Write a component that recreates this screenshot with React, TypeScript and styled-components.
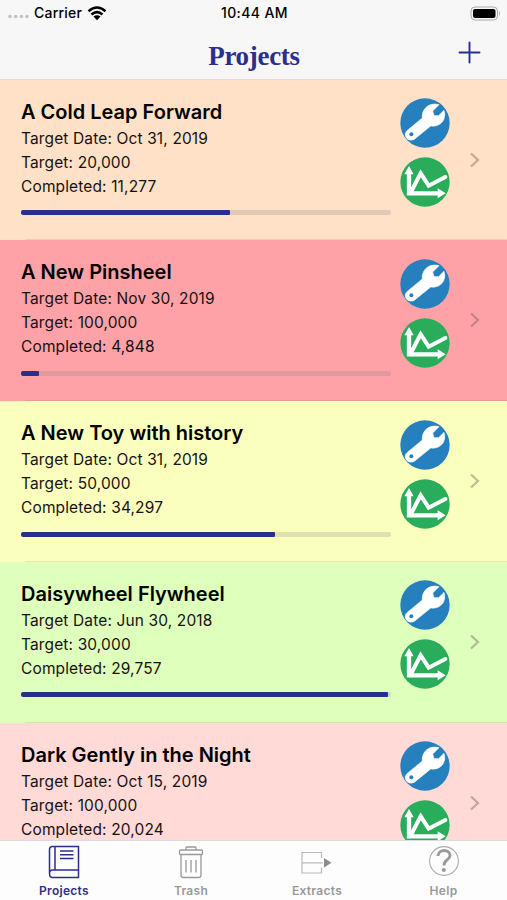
import React from "react";
import styled, { createGlobalStyle } from "styled-components";

const NAVY = "#2b2f8c";

const GlobalStyle = createGlobalStyle`
  * { box-sizing: border-box; }
  body { margin: 0; background: #fff; font-family: Inter, "Liberation Sans", sans-serif; }
`;

const Screen = styled.div`
  width: 507px;
  height: 900px;
  display: flex;
  flex-direction: column;
  overflow: hidden;
  color: #000;
`;

const Header = styled.header`
  flex: none;
  height: 79.5px;
  background: #f7f7f7;
  border-bottom: 1px solid #e3dbd5;
`;

const StatusBar = styled.div`
  height: 26px;
  display: grid;
  grid-template-columns: 1fr auto 1fr;
  align-items: center;
  padding: 0 6px 0 8px;
  font-size: 14px;
  font-weight: 500;
  line-height: 26px;
`;

const Carrier = styled.div`
  display: flex;
  align-items: center;
  gap: 5px;
  letter-spacing: 0.22px;
`;

const Clock = styled.div`
  letter-spacing: 0.4px;
`;

const BatteryIcon = styled.svg`
  justify-self: end;
`;

const NavBar = styled.div`
  height: 52px;
  display: grid;
  grid-template-columns: 1fr auto 1fr;
  align-items: center;
  padding: 0 26px;
`;

const NavTitle = styled.h1`
  grid-column: 2;
  margin: 8px 0 0 1px;
  font: 700 27px/30px "Liberation Serif", serif;
  letter-spacing: -0.3px;
  color: ${NAVY};
`;

const AddButton = styled.button`
  justify-self: end;
  display: flex;
  padding: 0;
  border: 0;
  background: none;
`;

const List = styled.main`
  flex: 1;
  min-height: 0;
  overflow: hidden;
`;

const Row = styled.article<{ $color: string }>`
  height: 160.8px;
  display: flex;
  padding: 0 26px 0 21px;
  background:
    linear-gradient(rgba(120, 110, 100, 0.16), rgba(120, 110, 100, 0.16)) 25px 100% / 100% 1px no-repeat,
    ${(p) => p.$color};
`;

const Details = styled.div`
  width: 370px;
  padding-top: 19px;
`;

const ProjectName = styled.h2`
  margin: 0 0 2px;
  font-size: 20px;
  font-weight: 600;
  line-height: 26px;
  letter-spacing: 0;
  white-space: nowrap;
`;

const Meta = styled.p`
  margin: 0;
  font-size: 15.5px;
  line-height: 24px;
  letter-spacing: 0.13px;
  color: #17110f;
  white-space: nowrap;
`;

const Track = styled.div`
  height: 5px;
  margin-top: 11.5px;
  border-radius: 2px;
  background: rgba(125, 125, 135, 0.23);
  overflow: hidden;
`;

const Fill = styled.div`
  height: 100%;
  border-radius: 1px;
  background: #26308c;
`;

const Actions = styled.div`
  width: 50px;
  margin-left: 9px;
  padding-top: 18.5px;
  display: flex;
  flex-direction: column;
  gap: 9px;
  svg { display: block; }
`;

const Disclosure = styled.svg`
  margin: 71px 0 0 auto;
`;

const TabBar = styled.nav`
  flex: none;
  height: 60px;
  display: grid;
  grid-template-columns: 128px 126px 126px 127px;
  background: #fdfdfd;
  border-top: 1px solid #dedada;
`;

const Tab = styled.div<{ $active?: boolean }>`
  display: flex;
  flex-direction: column;
  align-items: center;
  color: ${(p) => (p.$active ? NAVY : "#999")};
  svg { margin-top: 4px; }
`;

const TabLabel = styled.span`
  margin-top: 4px;
  font-size: 12px;
  font-weight: 600;
  line-height: 16px;
  letter-spacing: 0.3px;
`;

const WrenchIcon = () => (
  <svg width="50" height="50" viewBox="0 0 150 150">
    <circle cx="75" cy="75" r="74" fill="#2680bd" />
    <path
      d="M21 98 L67 60 C64 38 83 11 117 20 L98 39 L102 53 L116 53 L132 37 C141 65 121 88 92 84 L45 122 C36 129 24 127 19 119 C14 112 15 103 21 98 Z"
      fill="#fff"
      stroke="#fff"
      strokeWidth="2"
      strokeLinejoin="round"
    />
    <circle cx="34" cy="109" r="6" fill="#2680bd" />
  </svg>
);

const ChartIcon = () => (
  <svg width="50" height="50" viewBox="0 0 150 150">
    <circle cx="75" cy="75" r="74" fill="#29ad5b" />
    <g fill="none" stroke="#fff">
      <path d="M27 44 V109 H116" strokeWidth="13" />
      <path d="M36 99 L62 49 L86 86 L136 60" strokeWidth="12" strokeLinecap="round" strokeLinejoin="miter" />
    </g>
    <path d="M27 27 L41 52 H13 Z M137 109 L113 94 V124 Z" fill="#fff" />
  </svg>
);

const projects = [
  { name: "A Cold Leap Forward", due: "Oct 31, 2019", target: 20000, done: 11277, color: "#fee1c6" },
  { name: "A New Pinsheel", due: "Nov 30, 2019", target: 100000, done: 4848, color: "#ffa2a8" },
  { name: "A New Toy with history", due: "Oct 31, 2019", target: 50000, done: 34297, color: "#fbffbd" },
  { name: "Daisywheel Flywheel", due: "Jun 30, 2018", target: 30000, done: 29757, color: "#dfffbc" },
  { name: "Dark Gently in the Night", due: "Oct 15, 2019", target: 100000, done: 20024, color: "#ffdad7" },
];

const format = (n: number) => n.toLocaleString("en-US");

export default function App() {
  return (
    <Screen>
      <GlobalStyle />
      <Header>
        <StatusBar>
          <Carrier>
            <svg width="21" height="12" viewBox="0 0 21 12" fill="#c3c3c3">
              <circle cx="2" cy="9.5" r="1.8" />
              <circle cx="7.7" cy="9.5" r="1.8" />
              <circle cx="13.4" cy="9.5" r="1.8" />
              <circle cx="19" cy="9.5" r="1.8" />
            </svg>
            <span>Carrier</span>
            <svg width="20" height="15" viewBox="0 0 20 15" fill="none" stroke="#000" strokeWidth="2.5">
              <path d="M1.5 5.2 Q10 -2.1 18.5 5.2" />
              <path d="M4.5 8.5 Q10 3.8 15.5 8.5" />
              <path d="M6.5 10.6 Q10 7.7 13.5 10.6 L10 14.3 Z" fill="#000" stroke="none" />
            </svg>
          </Carrier>
          <Clock>10:44 AM</Clock>
          <BatteryIcon width="31" height="15" viewBox="0 0 31 15">
            <rect x="1" y="1" width="26.5" height="13" rx="4" fill="none" stroke="#aaa" />
            <rect x="3" y="3" width="22.5" height="9" rx="2" />
            <path d="M29 5 Q31 7.5 29 10 Z" fill="#aaa" />
          </BatteryIcon>
        </StatusBar>
        <NavBar>
          <NavTitle>Projects</NavTitle>
          <AddButton aria-label="Add project">
            <svg width="23" height="23" viewBox="0 0 23 23" stroke={NAVY} strokeWidth="1.9" strokeLinecap="round">
              <path d="M11.5 1.5 V21.5 M1.5 11.5 H21.5" />
            </svg>
          </AddButton>
        </NavBar>
      </Header>
      <List>
        {projects.map((p) => (
          <Row key={p.name} $color={p.color}>
            <Details>
              <ProjectName>{p.name}</ProjectName>
              <Meta>Target Date: {p.due}</Meta>
              <Meta>Target: {format(p.target)}</Meta>
              <Meta>Completed: {format(p.done)}</Meta>
              <Track>
                <Fill style={{ width: `${(p.done / p.target) * 100}%` }} />
              </Track>
            </Details>
            <Actions>
              <WrenchIcon />
              <ChartIcon />
            </Actions>
            <Disclosure width="12" height="18" viewBox="0 0 12 18" fill="none" stroke="rgba(110,90,85,0.42)" strokeWidth="2.2">
              <path d="M2 2.5 L9 9 L2 15.5" />
            </Disclosure>
          </Row>
        ))}
      </List>
      <TabBar>
        <Tab $active>
          <svg width="34" height="34" viewBox="0 0 34 34" fill="none" stroke="currentColor" strokeWidth="1.5" strokeLinejoin="round">
            <path d="M31.5 25 H5.5 C3.5 25 2.5 26.5 2.5 28.5 S3.5 32.5 5.5 32.5 H31.5 V1.5 H5.5 C3.5 1.5 2.5 2.5 2.5 4.5 V28.5 M8 1.5 V25" />
            <path d="M13 6 H26.5 M13 9.8 H26.5 M13 13.5 H26.5" />
          </svg>
          <TabLabel>Projects</TabLabel>
        </Tab>
        <Tab>
          <svg width="26" height="34" viewBox="0 0 26 34" fill="none" stroke="currentColor" strokeWidth="1.3" strokeLinejoin="round">
            <path d="M8 5 V3 Q8 2 9 2 H17 Q18 2 18 3 V5" />
            <rect x="1.5" y="5" width="23" height="4.5" rx="1" />
            <path d="M3 9.5 V30 Q3 32.5 5.5 32.5 H20.5 Q23 32.5 23 30 V9.5 M8 15 V27.5 M13 15 V27.5 M18 15 V27.5" />
          </svg>
          <TabLabel>Trash</TabLabel>
        </Tab>
        <Tab>
          <svg width="32" height="34" viewBox="0 0 32 34" fill="none" stroke="#bbb" strokeWidth="1.2">
            <path d="M20.5 13 V7.5 H1 V28 H20.5 V22.5 M1 17.8 H22" />
            <path d="M23 13 L30.5 17.8 L23 22.6 Z" fill="#8c8c8c" stroke="none" />
          </svg>
          <TabLabel>Extracts</TabLabel>
        </Tab>
        <Tab>
          <svg width="34" height="34" viewBox="0 0 34 34" fill="none" stroke="currentColor">
            <circle cx="17" cy="16" r="14.4" strokeWidth="1.1" stroke="#aaa" />
            <path d="M11 11 C11.5 3.5 23 4 23 10.5 C23 15 17 14.5 17 20.5" strokeWidth="2.9" />
            <circle cx="16.8" cy="25" r="2" fill="currentColor" stroke="none" />
          </svg>
          <TabLabel>Help</TabLabel>
        </Tab>
      </TabBar>
    </Screen>
  );
}
